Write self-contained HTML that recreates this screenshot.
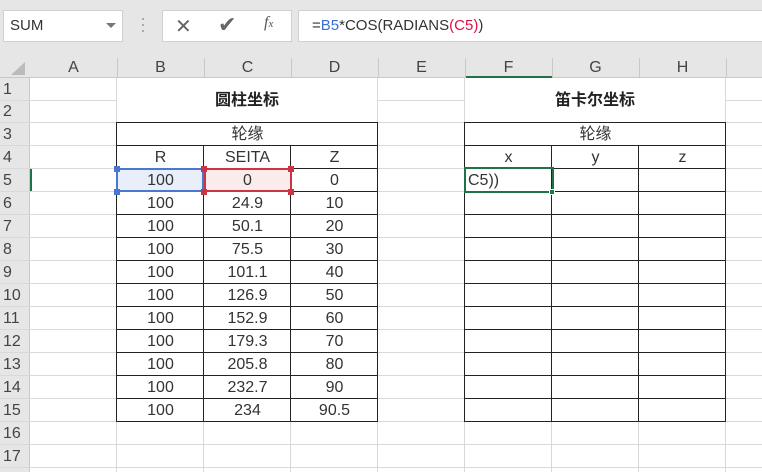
<!DOCTYPE html><html><head><meta charset="utf-8"><style>
body{margin:0;width:762px;height:472px;overflow:hidden;background:#fff;position:relative;font-family:"Liberation Sans","Noto Sans CJK SC",sans-serif;}
div{position:absolute;box-sizing:border-box}
.h{background:#d9d9d9;height:1px}
.v{background:#d9d9d9;width:1px}
.t{font-size:16px;color:#333;text-align:center;line-height:24px;height:23px}
.rn{left:0;width:30px;text-align:left;padding-left:3px;font-size:16px;color:#444;line-height:24px}
.ch{top:56px;height:22px;font-size:16px;color:#444;text-align:center;line-height:24px}
</style></head><body>
<div style="left:0;top:0;width:762px;height:56px;background:#e6e6e6"></div>
<div style="left:3px;top:10px;width:120px;height:32px;background:#fff;border:1px solid #d0d0d0;font-size:15px;color:#333;line-height:30px;padding-left:6px">SUM</div>
<div style="left:106px;top:23px;width:0;height:0;border-left:5px solid transparent;border-right:5px solid transparent;border-top:5px solid #777"></div>
<div style="left:142px;top:18px;width:2px;height:2px;background:#aaa;box-shadow:0 6px #aaa,0 12px #aaa"></div>
<div style="left:162px;top:10px;width:130px;height:32px;background:#fff;border:1px solid #d0d0d0"></div>
<div style="left:175px;top:14px;font-size:20px;color:#666">✕</div>
<div style="left:218px;top:12px;font-size:22px;color:#666">✔</div>
<div style="left:264px;top:14px;font-size:16px;color:#555;font-family:'Liberation Serif',serif;font-style:italic">f<span style="font-size:11px">x</span></div>
<div style="left:298px;top:10px;width:470px;height:32px;background:#fff;border:1px solid #d0d0d0;font-size:15px;color:#333;line-height:30px;padding-left:13px">=<span style="color:#3b6fd4">B5</span>*COS(RADIANS<span style="color:#d14">(C5)</span>)</div>
<div style="left:0;top:56px;width:762px;height:22px;background:#e6e6e6;border-bottom:1px solid #c8c8c8"></div>
<div style="left:0;top:78px;width:30px;height:394px;background:#e6e6e6;border-right:1px solid #c8c8c8"></div>
<div style="left:11px;top:62px;width:0;height:0;border-left:14px solid transparent;border-bottom:13px solid #bbb"></div>
<div style="left:465px;top:76px;width:87px;height:2px;background:#217346"></div>
<div style="left:30px;top:168px;width:2px;height:24px;background:#217346"></div>
<div class="ch" style="left:30px;width:87px">A</div><div class="ch" style="left:117px;width:87px">B</div><div class="ch" style="left:204px;width:87px">C</div><div class="ch" style="left:291px;width:87px">D</div><div class="ch" style="left:378px;width:87px">E</div><div class="ch" style="left:465px;width:87px">F</div><div class="ch" style="left:552px;width:87px">G</div><div class="ch" style="left:639px;width:87px">H</div>
<div class="v" style="left:117px;top:58px;height:20px;background:#c8c8c8"></div><div class="v" style="left:204px;top:58px;height:20px;background:#c8c8c8"></div><div class="v" style="left:291px;top:58px;height:20px;background:#c8c8c8"></div><div class="v" style="left:378px;top:58px;height:20px;background:#c8c8c8"></div><div class="v" style="left:465px;top:58px;height:20px;background:#c8c8c8"></div><div class="v" style="left:552px;top:58px;height:20px;background:#c8c8c8"></div><div class="v" style="left:639px;top:58px;height:20px;background:#c8c8c8"></div><div class="v" style="left:726px;top:58px;height:20px;background:#c8c8c8"></div>
<div class="rn" style="top:78px">1</div><div class="rn" style="top:100px">2</div><div class="rn" style="top:123px">3</div><div class="rn" style="top:146px">4</div><div class="rn" style="top:169px">5</div><div class="rn" style="top:192px">6</div><div class="rn" style="top:215px">7</div><div class="rn" style="top:238px">8</div><div class="rn" style="top:261px">9</div><div class="rn" style="top:284px">10</div><div class="rn" style="top:307px">11</div><div class="rn" style="top:330px">12</div><div class="rn" style="top:353px">13</div><div class="rn" style="top:376px">14</div><div class="rn" style="top:399px">15</div><div class="rn" style="top:422px">16</div><div class="rn" style="top:445px">17</div>
<div class="h" style="left:0;top:100px;width:117px"></div><div class="h" style="left:378px;top:100px;width:87px"></div><div class="h" style="left:726px;top:100px;width:36px"></div>
<div class="h" style="left:0;top:122px;width:762px"></div><div class="h" style="left:0;top:145px;width:762px"></div><div class="h" style="left:0;top:168px;width:762px"></div><div class="h" style="left:0;top:191px;width:762px"></div><div class="h" style="left:0;top:214px;width:762px"></div><div class="h" style="left:0;top:237px;width:762px"></div><div class="h" style="left:0;top:260px;width:762px"></div><div class="h" style="left:0;top:283px;width:762px"></div><div class="h" style="left:0;top:306px;width:762px"></div><div class="h" style="left:0;top:329px;width:762px"></div><div class="h" style="left:0;top:352px;width:762px"></div><div class="h" style="left:0;top:375px;width:762px"></div><div class="h" style="left:0;top:398px;width:762px"></div><div class="h" style="left:0;top:421px;width:762px"></div><div class="h" style="left:0;top:444px;width:762px"></div><div class="h" style="left:0;top:467px;width:762px"></div>
<div class="v" style="left:116px;top:78px;height:394px"></div><div class="v" style="left:203px;top:122px;height:350px"></div><div class="v" style="left:290px;top:122px;height:350px"></div><div class="v" style="left:377px;top:78px;height:394px"></div><div class="v" style="left:464px;top:78px;height:394px"></div><div class="v" style="left:551px;top:122px;height:350px"></div><div class="v" style="left:638px;top:122px;height:350px"></div><div class="v" style="left:725px;top:78px;height:394px"></div>
<div style="left:117px;top:78px;width:260px;height:44px;background:#fff"></div>
<div style="left:465px;top:78px;width:260px;height:44px;background:#fff"></div>
<div style="left:117px;top:123px;width:260px;height:22px;background:#fff"></div>
<div style="left:465px;top:123px;width:260px;height:22px;background:#fff"></div>
<div style="left:117px;top:78px;width:260px;height:44px;font-size:16px;font-weight:bold;text-align:center;line-height:46px;color:#222">圆柱坐标</div>
<div style="left:465px;top:78px;width:260px;height:44px;font-size:16px;font-weight:bold;text-align:center;line-height:46px;color:#222">笛卡尔坐标</div>
<div style="left:116px;top:122px;width:262px;height:300px;border:1px solid #222"></div>
<div style="left:116px;top:145px;width:262px;height:1px;background:#222"></div>
<div style="left:203px;top:145px;width:1px;height:277px;background:#222"></div><div style="left:290px;top:145px;width:1px;height:277px;background:#222"></div>
<div style="left:116px;top:168px;width:262px;height:231px;background:repeating-linear-gradient(#222 0 1px,transparent 1px 23px)"></div>
<div style="left:117px;top:169px;width:86px;height:22px;background:#e8effa"></div>
<div style="left:204px;top:169px;width:86px;height:22px;background:#fbecec"></div>
<div style="left:116px;top:168px;width:88px;height:24px;border:2px solid #4a78d0"></div>
<div style="left:204px;top:168px;width:88px;height:24px;border:2px solid #cc3344"></div>
<div style="left:114px;top:166px;width:6px;height:6px;background:#4a78d0"></div><div style="left:114px;top:189px;width:6px;height:6px;background:#4a78d0"></div>
<div style="left:201px;top:166px;width:6px;height:6px;background:#cc3344"></div><div style="left:201px;top:189px;width:6px;height:6px;background:#cc3344"></div><div style="left:288px;top:166px;width:6px;height:6px;background:#cc3344"></div><div style="left:288px;top:189px;width:6px;height:6px;background:#cc3344"></div>
<div class="t" style="left:117px;top:123px;width:261px">轮缘</div>
<div class="t" style="left:117px;top:146px;width:87px">R</div><div class="t" style="left:204px;top:146px;width:87px">SEITA</div><div class="t" style="left:291px;top:146px;width:87px">Z</div>
<div class="t" style="left:117px;top:169px;width:87px">100</div><div class="t" style="left:204px;top:169px;width:87px">0</div><div class="t" style="left:291px;top:169px;width:87px">0</div>
<div class="t" style="left:117px;top:192px;width:87px">100</div><div class="t" style="left:204px;top:192px;width:87px">24.9</div><div class="t" style="left:291px;top:192px;width:87px">10</div>
<div class="t" style="left:117px;top:215px;width:87px">100</div><div class="t" style="left:204px;top:215px;width:87px">50.1</div><div class="t" style="left:291px;top:215px;width:87px">20</div>
<div class="t" style="left:117px;top:238px;width:87px">100</div><div class="t" style="left:204px;top:238px;width:87px">75.5</div><div class="t" style="left:291px;top:238px;width:87px">30</div>
<div class="t" style="left:117px;top:261px;width:87px">100</div><div class="t" style="left:204px;top:261px;width:87px">101.1</div><div class="t" style="left:291px;top:261px;width:87px">40</div>
<div class="t" style="left:117px;top:284px;width:87px">100</div><div class="t" style="left:204px;top:284px;width:87px">126.9</div><div class="t" style="left:291px;top:284px;width:87px">50</div>
<div class="t" style="left:117px;top:307px;width:87px">100</div><div class="t" style="left:204px;top:307px;width:87px">152.9</div><div class="t" style="left:291px;top:307px;width:87px">60</div>
<div class="t" style="left:117px;top:330px;width:87px">100</div><div class="t" style="left:204px;top:330px;width:87px">179.3</div><div class="t" style="left:291px;top:330px;width:87px">70</div>
<div class="t" style="left:117px;top:353px;width:87px">100</div><div class="t" style="left:204px;top:353px;width:87px">205.8</div><div class="t" style="left:291px;top:353px;width:87px">80</div>
<div class="t" style="left:117px;top:376px;width:87px">100</div><div class="t" style="left:204px;top:376px;width:87px">232.7</div><div class="t" style="left:291px;top:376px;width:87px">90</div>
<div class="t" style="left:117px;top:399px;width:87px">100</div><div class="t" style="left:204px;top:399px;width:87px">234</div><div class="t" style="left:291px;top:399px;width:87px">90.5</div>
<div style="left:464px;top:122px;width:262px;height:300px;border:1px solid #222"></div>
<div style="left:464px;top:145px;width:262px;height:1px;background:#222"></div>
<div style="left:551px;top:145px;width:1px;height:277px;background:#222"></div><div style="left:638px;top:145px;width:1px;height:277px;background:#222"></div>
<div style="left:464px;top:168px;width:262px;height:231px;background:repeating-linear-gradient(#222 0 1px,transparent 1px 23px)"></div>
<div class="t" style="left:465px;top:123px;width:261px">轮缘</div>
<div class="t" style="left:465px;top:146px;width:87px">x</div><div class="t" style="left:552px;top:146px;width:87px">y</div><div class="t" style="left:639px;top:146px;width:87px">z</div>
<div style="left:464px;top:167px;width:90px;height:26px;border:2px solid #217346"></div>
<div style="left:549px;top:189px;width:6px;height:6px;background:#217346;border:1px solid #fff"></div>
<div class="t" style="left:468px;top:169px;text-align:left">C5))</div>
</body></html>
